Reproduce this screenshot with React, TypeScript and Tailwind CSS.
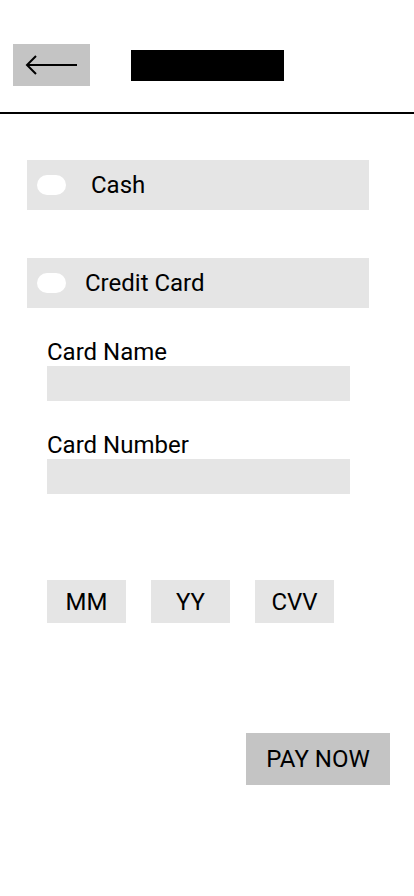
const font = { fontFamily: "Roboto, 'Liberation Sans', sans-serif" };

function Radio({ label, gap }: { label: string; gap: string }) {
  return (
    <div className="mx-[27px] flex h-[50px] w-[342px] items-center bg-[#e5e5e5]">
      <div className="ml-[10px] h-[20px] w-[29px] rounded-full bg-white" />
      <span className={`${gap} text-[24px] leading-none text-black`}>{label}</span>
    </div>
  );
}

function Field({ label, top }: { label: string; top: string }) {
  return (
    <div className={`${top} ml-[47px]`}>
      <div className="text-[24px] leading-none text-black">{label}</div>
      <div className="mt-[2px] h-[35px] w-[303px] bg-[#e5e5e5]" />
    </div>
  );
}

function Small({ label }: { label: string }) {
  return (
    <div className="flex h-[43px] w-[79px] items-center justify-center bg-[#e5e5e5] text-[24px] leading-none text-black">
      {label}
    </div>
  );
}

export default function App() {
  return (
    <div className="h-[896px] w-[414px] overflow-hidden bg-white" style={font}>
      {/* header */}
      <div className="flex items-start pt-[44px]">
        <div className="ml-[13px] flex h-[42px] w-[77px] items-center justify-center bg-[#c4c4c4]">
          <svg width="54" height="22" viewBox="0 0 54 22" fill="none" stroke="black" strokeWidth="2">
            <path d="M2 11H52" />
            <path d="M11 2L2 11L11 20" />
          </svg>
        </div>
        <div className="ml-[41px] mt-[6px] h-[31px] w-[153px] bg-black" />
      </div>
      <div className="mt-[26px] h-[2px] w-full bg-black" />

      <div className="mt-[46px]">
        <Radio label="Cash" gap="ml-[25px]" />
      </div>
      <div className="mt-[48px]">
        <Radio label="Credit Card" gap="ml-[19px]" />
      </div>

      <Field label="Card Name" top="mt-[32px]" />
      <Field label="Card Number" top="mt-[32px]" />

      <div className="ml-[47px] mt-[86px] flex gap-[25px]">
        <Small label="MM" />
        <Small label="YY" />
        <Small label="CVV" />
      </div>

      <div className="ml-[246px] mt-[110px] flex h-[52px] w-[144px] items-center justify-center bg-[#c4c4c4] text-[24px] leading-none text-black">
        PAY NOW
      </div>
    </div>
  );
}
